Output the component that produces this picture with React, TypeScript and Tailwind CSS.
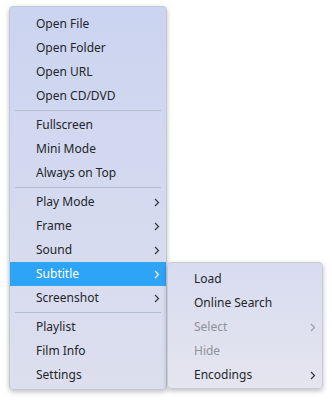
import { ReactNode } from 'react'

type Entry =
  | { sep: true }
  | { label: string; sub?: boolean; disabled?: boolean; active?: boolean }

const mainItems: Entry[] = [
  { label: 'Open File' },
  { label: 'Open Folder' },
  { label: 'Open URL' },
  { label: 'Open CD/DVD' },
  { sep: true },
  { label: 'Fullscreen' },
  { label: 'Mini Mode' },
  { label: 'Always on Top' },
  { sep: true },
  { label: 'Play Mode', sub: true },
  { label: 'Frame', sub: true },
  { label: 'Sound', sub: true },
  { label: 'Subtitle', sub: true, active: true },
  { label: 'Screenshot', sub: true },
  { sep: true },
  { label: 'Playlist' },
  { label: 'Film Info' },
  { label: 'Settings' },
]

const subItems: Entry[] = [
  { label: 'Load' },
  { label: 'Online Search' },
  { label: 'Select', sub: true, disabled: true },
  { label: 'Hide', disabled: true },
  { label: 'Encodings', sub: true },
]

function Chevron({ className }: { className: string }) {
  return (
    <svg width="6" height="9" viewBox="0 0 6 9" className={className}>
      <path d="M1 1 L4.5 4.5 L1 8" fill="none" stroke="currentColor" strokeWidth="1.2" />
    </svg>
  )
}

function Row({ item, children }: { item: Entry; children?: ReactNode }) {
  if ('sep' in item) {
    return (
      <div className="h-[5px] flex items-center px-[5px]">
        <div className="h-px w-full bg-[#b4bccf]" />
      </div>
    )
  }
  const color = item.active ? 'bg-[#2ea4f6] text-white' : item.disabled ? 'text-[#8e929c]' : 'text-[#232629]'
  return (
    <div className={`relative h-6 flex items-center pl-[26px] pr-[6px] ${color}`}>
      <span className="flex-1">{item.label}</span>
      {item.sub && <Chevron className={item.active ? 'text-white' : item.disabled ? 'text-[#9a9ea8]' : 'text-[#31363b]'} />}
      {children}
    </div>
  )
}

export default function App() {
  return (
    <div className="w-[332px] h-[401px] bg-white pl-[9px] pt-[6px] text-[12px] font-['Noto_Sans',sans-serif]">
      {/* Main menu */}
      <div className="w-[158px] h-[384px] pt-[5px] rounded-[4px] bg-gradient-to-b from-[#cbd4f0] to-[#dddfee] shadow-[0_2px_5px_rgba(0,0,0,0.25)] border border-[#c3c8d6]">
        {mainItems.map((item, i) => (
          <Row key={i} item={item}>
            {'label' in item && item.active && (
              <div className="absolute left-[157px] top-0 w-[156px] h-[127px] pt-[4px] rounded-[4px] bg-gradient-to-b from-[#d8dcf0] to-[#e5e5ef] shadow-[0_2px_5px_rgba(0,0,0,0.25)] border border-[#c7cbd6]">
                {subItems.map((s, j) => (
                  <Row key={j} item={s} />
                ))}
              </div>
            )}
          </Row>
        ))}
      </div>
    </div>
  )
}
